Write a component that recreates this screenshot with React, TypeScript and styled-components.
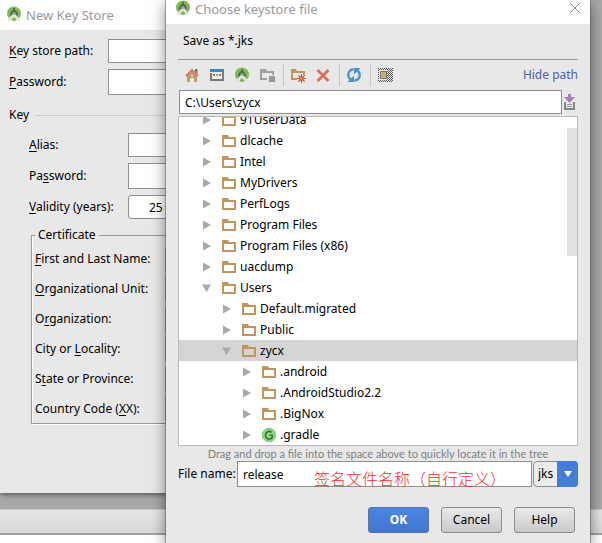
import React, { Fragment, ReactNode } from "react";
import styled, { createGlobalStyle, css } from "styled-components";

const GlobalStyle = createGlobalStyle`
  *, *::before, *::after { box-sizing: border-box; }
  html, body, #root { height: 100%; margin: 0; }
  body { overflow: hidden; }
  body, button, input, select {
    font-family: "Noto Sans", "Noto Sans CJK SC", sans-serif;
    font-size: 12px;
    line-height: 16px;
    color: #000;
  }
`;

const Desktop = styled.div`
  position: relative;
  display: flex;
  flex-direction: column;
  height: 100vh;
  overflow: hidden;
  background: #a9a9a9;
`;

const StatusBar = styled.div`
  margin-top: auto;
  height: 26px;
  border-top: 1px solid #c8c8c8;
  border-bottom: 2px solid #a2a2a2;
  background: linear-gradient(#e6e6e6, #d9d9d9);
`;

const Below = styled.div`
  height: 8px;
  background: #fff;
`;

const windowFrame = css`
  position: absolute;
  display: flex;
  flex-direction: column;
  background: #e8e8e8;
`;

const StoreWindow = styled.section`
  ${windowFrame}
  top: 0;
  left: 0;
  right: 60px;
  bottom: 50px;
  box-shadow: 0 1px 6px rgba(0, 0, 0, 0.6);
`;

const Dialog = styled.section`
  ${windowFrame}
  top: 0;
  left: 166px;
  right: 12px;
  bottom: 0;
  box-shadow: 0 0 0 1px rgba(90, 90, 90, 0.5), 0 4px 14px rgba(0, 0, 0, 0.5);
`;

const TitleBar = styled.header<{ $compact?: boolean }>`
  display: flex;
  flex: none;
  align-items: center;
  gap: 4px;
  height: ${(p) => (p.$compact ? 24 : 30)}px;
  padding: ${(p) => (p.$compact ? "0 9px 8px" : "0 6px 2px")};
  background: #fff;
`;

const Title = styled.h1`
  flex: 1;
  margin: 0;
  padding-top: 2px;
  font-size: 13px;
  font-weight: 400;
  color: #999;
`;

const CloseButton = styled.button`
  display: flex;
  padding: 0;
  border: 0;
  background: none;
`;

const StoreForm = styled.form`
  display: flex;
  flex-direction: column;
  padding: 9px 9px 0;
`;

const FieldRow = styled.div<{ $label: number; $height?: number }>`
  display: grid;
  grid-template-columns: ${(p) => p.$label}px 1fr;
  align-items: center;
  height: ${(p) => p.$height ?? 24}px;
`;

const KeyGroup = styled.div`
  display: flex;
  flex-direction: column;
  padding-left: 20px;
`;

const Stack = styled.div`
  display: flex;
  flex-direction: column;
  gap: 6px;
`;

const TextField = styled.input`
  width: 100%;
  min-width: 0;
  height: 100%;
  padding: 0 5px;
  border: 1px solid #8f8f8f;
  background: #fff;
`;

const YearsField = styled(TextField)`
  padding-left: 20px;
  border-radius: 3px;
`;

const SectionTitle = styled.h2`
  display: flex;
  align-items: center;
  gap: 6px;
  margin: 12px 0 10px;
  font-size: 12px;
  font-weight: 400;

  &::after {
    content: "";
    flex: 1;
    height: 1px;
    background: #ccc;
  }
`;

const Certificate = styled.fieldset`
  display: flex;
  flex-direction: column;
  gap: 6px;
  margin: 8px 0 0 2px;
  padding: 4px 9px 2px 3px;
  border: 1px solid #999;
  box-shadow: inset 1px 0 #fff, 0 1px #fff;

  legend {
    padding: 0 3px;
  }
`;

const Mnemonic = styled.span`
  text-decoration: underline;
  text-underline-offset: 2px;
  text-decoration-thickness: 1px;
  text-decoration-skip-ink: none;
`;

const DialogBody = styled.form`
  display: flex;
  flex: 1;
  flex-direction: column;
  min-height: 0;
  padding: 9px 12px 10px;
`;

const Description = styled.p`
  margin: 0 5px;
`;

const Toolbar = styled.div`
  display: flex;
  flex: none;
  align-items: center;
  height: 31px;
  margin-top: 10px;
  padding-left: 6px;
  border-top: 1px solid #999;
`;

const ToolGroup = styled.div`
  display: flex;
  gap: 9px;
`;

const ToolButton = styled.button`
  display: flex;
  flex: none;
  width: 16px;
  height: 16px;
  padding: 0;
  border: 0;
  background: none;
`;

const Divider = styled.span`
  width: 1px;
  height: 22px;
  margin: 0 6px 0 8px;
  background: #c4c4c4;
`;

const HidePath = styled.a`
  margin-left: auto;
  color: #4a63a8;
  text-decoration: none;
`;

const PathRow = styled.div`
  display: flex;
  flex: none;
  align-items: center;
  height: 24px;
  padding-left: 1px;
`;

const Tree = styled.ul`
  position: relative;
  display: flex;
  flex: 1;
  flex-direction: column;
  justify-content: flex-end;
  min-height: 0;
  margin: 2px 0 0;
  padding: 0;
  border: 1px solid #b8bcb8;
  background: #fff;
  list-style: none;
  overflow: hidden;
`;

const TreeRow = styled.li<{ $depth: number; $selected?: boolean }>`
  display: flex;
  flex: none;
  align-items: center;
  gap: 3px;
  height: 21px;
  padding-left: ${(p) => 23 + p.$depth * 20}px;
  background: ${(p) => (p.$selected ? "#d4d4d4" : "transparent")};

  svg {
    flex: none;
  }
`;

const ScrollThumb = styled.div`
  position: absolute;
  top: 11px;
  right: 0;
  width: 10px;
  height: 128px;
  background: #e2e2e2;
`;

const Hint = styled.p`
  flex: none;
  margin: 0;
  font-family: Lato, sans-serif;
  font-size: 11px;
  line-height: 15px;
  text-align: center;
  color: #808080;
`;

const FileRow = styled.div`
  position: relative;
  display: flex;
  flex: none;
  align-items: center;
  gap: 1px;
  height: 26px;

  label {
    flex: none;
    width: 58px;
    white-space: nowrap;
  }
`;

const Annotation = styled.span`
  position: absolute;
  top: 6px;
  left: 136px;
  font-family: "Noto Sans CJK SC", sans-serif;
  font-size: 16px;
  font-weight: 300;
  line-height: 22px;
  color: #f03030;
  white-space: nowrap;
  pointer-events: none;
`;

const Combo = styled.div`
  position: relative;
  display: flex;
  flex: none;
  width: 45px;
  height: 26px;
`;

const ComboSelect = styled.select`
  appearance: none;
  width: 100%;
  padding: 0 0 0 4px;
  border: 1px solid #8f8f8f;
  border-radius: 4px;
  background: #ececec;
`;

const ComboArrow = styled.span`
  position: absolute;
  inset: 0 0 0 auto;
  display: flex;
  align-items: center;
  justify-content: center;
  width: 21px;
  border-radius: 0 4px 4px 0;
  background: #447cd6;
  pointer-events: none;
`;

const Actions = styled.div`
  display: flex;
  flex: none;
  justify-content: flex-end;
  gap: 12px;
  margin-top: 20px;
  padding-right: 3px;
`;

const ActionButton = styled.button<{ $primary?: boolean }>`
  width: 61px;
  height: 26px;
  padding: 0;
  border: 1px solid ${(p) => (p.$primary ? "#5674a8" : "#8c8c8c")};
  border-radius: 3px;
  background: ${(p) =>
    p.$primary ? "linear-gradient(#4a86e0, #4076cf)" : "linear-gradient(#eaeaea, #c9c9c9)"};
  color: ${(p) => (p.$primary ? "#fff" : "#000")};
  font-weight: ${(p) => (p.$primary ? 700 : 400)};
`;

const Icon = ({ children, width = 16, height = 16 }: { children: ReactNode; width?: number; height?: number }) => (
  <svg width={width} height={height} viewBox={`0 0 ${width} ${height}`} fill="none" aria-hidden="true">
    {children}
  </svg>
);

const StudioIcon = () => (
  <Icon>
    <circle cx="8" cy="7.5" r="7" fill="#7ebb52" />
    <path d="M3.800 9.500C4 6 5.800 4 8 4s4 2 4.200 5.500z" fill="#55695a" />
    <path d="M7.300 2h1.400v3H7.300z" fill="#4a5a4c" />
    <path d="M7 8h2l5.500 6-1.500 1.500L8 11.500 3 15.500 1.500 14z" fill="#e3e6e0" />
    <path d="M6.500 12.500L8 11l1.500 1.500V15h-3z" fill="#7ebb52" />
    <path d="M6.500 6.500h3V9h-3z" fill="#a9b5a7" />
  </Icon>
);

const HomeIcon = () => (
  <Icon>
    <path d="M11 2h2.500v6H11z" fill="#777" />
    <path d="M3 8l5-5 5 5v7h-3v-4H6v4H3z" fill="#c09a64" />
    <path d="M2 9l6-6 6 6" stroke="#d47f76" strokeWidth="2" />
    <path d="M7 8h2v1.500H7z" fill="#f0e4d2" />
  </Icon>
);

const DesktopIcon = () => (
  <Icon>
    <path d="M2 6v7h12V5" stroke="#7a7a7a" strokeWidth="2" />
    <path d="M1 2h14v3H1z" fill="#3c87b8" />
    <path d="M3 6h10v6H3z" fill="#eee" />
    <path d="M4 7h2v2H4zM10 7h2v2h-2z" fill="#777" />
    <path d="M7 7h2v2H7z" fill="#cf9345" />
  </Icon>
);

const ModuleIcon = () => (
  <Icon>
    <path d="M1 13V2h6l1 2h7v4h-2V6H3v5h5v2z" fill="#a0a0a0" />
    <path d="M10 9h6v6h-6z" fill="#999" />
  </Icon>
);

const NewFolderIcon = () => (
  <Icon>
    <path d="M1 13V2h5l1 2h8v4h-2V6H3v5h4v2z" fill="#bf9558" />
    <path d="M11.500 7v9M7 11.500h9M8.300 8.300l6.400 6.400M14.700 8.300l-6.400 6.400" stroke="#c8503c" strokeWidth="1.200" />
    <circle cx="11.500" cy="11.500" r="2.200" fill="#d04a35" />
    <circle cx="11.500" cy="11.500" r="1.100" fill="#f2b44a" />
  </Icon>
);

const DeleteIcon = () => (
  <Icon>
    <path d="M2.500 3l11 11M13.500 3l-11 11" stroke="#df6a5c" strokeWidth="2.600" />
  </Icon>
);

const RefreshIcon = () => (
  <Icon>
    <path d="M7.500 2.300C3.800 2.800 2 5.500 2.300 8.500c.2 1.800 1 3 2.200 4M8.500 13.700c3.700-.5 5.500-3.200 5.200-6.200-.2-1.800-1-3-2.200-4" stroke="#4a93c2" strokeWidth="2.400" />
    <path d="M1.500 15H8V8.500zM14.500 1H8v6.500z" fill="#4a93c2" />
  </Icon>
);

const HiddenFilesIcon = () => (
  <Icon>
    <defs>
      <pattern id="dither" width="2" height="2" patternUnits="userSpaceOnUse">
        <path d="M0 0h1v1H0zM1 1h1v1H1z" fill="#555" />
      </pattern>
    </defs>
    <path d="M1 1h15v14H1z" fill="url(#dither)" />
    <path d="M2 3h8v10H2z" fill="#e8e8e8" />
    <path d="M3.500 4.500h6v7h-6z" fill="#d3ab74" stroke="#777" />
  </Icon>
);

const HistoryIcon = () => (
  <Icon>
    <path d="M3 8v7h9V8" stroke="#858585" strokeWidth="2" />
    <path d="M5 10.500h5M5 12.500h5" stroke="#999" />
    <path d="M6 0h3v3h4L7.500 9 2 3h4z" fill="#a87cbb" />
  </Icon>
);

const CloseIcon = () => (
  <Icon width={12} height={12}>
    <path d="M1 1l10 10M11 1L1 11" stroke="#888" />
  </Icon>
);

const FolderIcon = () => (
  <Icon>
    <path fillRule="evenodd" d="M1 14V2h6l1 2h7v10zM3 6v6h10V6z" fill="#bf9660" />
  </Icon>
);

const GradleIcon = () => (
  <Icon>
    <circle cx="8" cy="8" r="7" fill="#8edb83" />
    <circle cx="8" cy="8" r="6.500" stroke="#70c567" />
    <path d="M11 5.500A3.800 3.800 0 1 0 11.300 10.500V8.300H8.500" stroke="#3f6d43" strokeWidth="1.600" />
  </Icon>
);

const ExpandArrow = ({ open }: { open?: boolean }) => (
  <Icon>
    {open ? <path d="M0 4.500h9L4.500 12z" fill="#a9a9a9" /> : <path d="M1 3.500v9L9 8z" fill="#a9a9a9" />}
  </Icon>
);

type Node = { name: string; depth: number; open?: boolean; selected?: boolean; gradle?: boolean };

const nodes: Node[] = [
  { name: "91UserData", depth: 0 },
  { name: "dlcache", depth: 0 },
  { name: "Intel", depth: 0 },
  { name: "MyDrivers", depth: 0 },
  { name: "PerfLogs", depth: 0 },
  { name: "Program Files", depth: 0 },
  { name: "Program Files (x86)", depth: 0 },
  { name: "uacdump", depth: 0 },
  { name: "Users", depth: 0, open: true },
  { name: "Default.migrated", depth: 1 },
  { name: "Public", depth: 1 },
  { name: "zycx", depth: 1, open: true, selected: true },
  { name: ".android", depth: 2 },
  { name: ".AndroidStudio2.2", depth: 2 },
  { name: ".BigNox", depth: 2 },
  { name: ".gradle", depth: 2, gradle: true },
];

const certificateFields: [string, string, string, string][] = [
  ["first-last", "", "F", "irst and Last Name:"],
  ["unit", "", "O", "rganizational Unit:"],
  ["organization", "O", "r", "ganization:"],
  ["city", "City or ", "L", "ocality:"],
  ["state", "S", "t", "ate or Province:"],
  ["country", "Country Code (", "X", "X):"],
];

const tools = [
  [
    { label: "Home", icon: <HomeIcon /> },
    { label: "Desktop", icon: <DesktopIcon /> },
    { label: "Project", icon: <StudioIcon /> },
    { label: "Module", icon: <ModuleIcon /> },
  ],
  [
    { label: "New folder", icon: <NewFolderIcon /> },
    { label: "Delete", icon: <DeleteIcon /> },
  ],
  [{ label: "Refresh", icon: <RefreshIcon /> }],
  [{ label: "Show hidden files", icon: <HiddenFilesIcon /> }],
];

function NewKeyStore() {
  return (
    <StoreWindow>
      <TitleBar>
        <StudioIcon />
        <Title>New Key Store</Title>
      </TitleBar>
      <StoreForm>
        <Stack>
          <FieldRow $label={99}>
            <label htmlFor="store-path"><Mnemonic>K</Mnemonic>ey store path:</label>
            <TextField id="store-path" />
          </FieldRow>
          <FieldRow $label={99} $height={26}>
            <label htmlFor="store-password"><Mnemonic>P</Mnemonic>assword:</label>
            <TextField id="store-password" type="password" />
          </FieldRow>
        </Stack>
        <SectionTitle>Key</SectionTitle>
        <KeyGroup>
          <Stack>
            <FieldRow $label={99}>
              <label htmlFor="alias"><Mnemonic>A</Mnemonic>lias:</label>
              <TextField id="alias" />
            </FieldRow>
            <FieldRow $label={99} $height={26}>
              <label htmlFor="key-password">Pa<Mnemonic>s</Mnemonic>sword:</label>
              <TextField id="key-password" type="password" />
            </FieldRow>
            <FieldRow $label={99}>
              <label htmlFor="validity"><Mnemonic>V</Mnemonic>alidity (years):</label>
              <YearsField id="validity" defaultValue="25" />
            </FieldRow>
          </Stack>
          <Certificate>
            <legend>Certificate</legend>
            {certificateFields.map(([id, before, key, after]) => (
              <FieldRow key={id} $label={130}>
                <label htmlFor={id}>{before}<Mnemonic>{key}</Mnemonic>{after}</label>
                <TextField id={id} />
              </FieldRow>
            ))}
          </Certificate>
        </KeyGroup>
      </StoreForm>
    </StoreWindow>
  );
}

function ChooseKeystore() {
  return (
    <Dialog role="dialog" aria-label="Choose keystore file">
      <TitleBar $compact>
        <StudioIcon />
        <Title>Choose keystore file</Title>
        <CloseButton type="button" aria-label="Close"><CloseIcon /></CloseButton>
      </TitleBar>
      <DialogBody onSubmit={(e) => e.preventDefault()}>
        <Description>Save as *.jks</Description>
        <Toolbar>
          {tools.map((group, index) => (
            <Fragment key={index}>
              {index > 0 && <Divider />}
              <ToolGroup>
                {group.map((tool) => (
                  <ToolButton key={tool.label} type="button" aria-label={tool.label}>{tool.icon}</ToolButton>
                ))}
              </ToolGroup>
            </Fragment>
          ))}
          <HidePath href="#">Hide path</HidePath>
        </Toolbar>
        <PathRow>
          <TextField aria-label="Path" defaultValue="C:\Users\zycx" />
          <ToolButton type="button" aria-label="Recent paths"><HistoryIcon /></ToolButton>
        </PathRow>
        <Tree>
          {nodes.map((node) => (
            <TreeRow key={node.name} $depth={node.depth} $selected={node.selected}>
              <ExpandArrow open={node.open} />
              {node.gradle ? <GradleIcon /> : <FolderIcon />}
              <span>{node.name}</span>
            </TreeRow>
          ))}
          <ScrollThumb />
        </Tree>
        <Hint>Drag and drop a file into the space above to quickly locate it in the tree</Hint>
        <FileRow>
          <label htmlFor="file-name">File name:</label>
          <TextField id="file-name" defaultValue="release" />
          <Combo>
            <ComboSelect aria-label="Extension" defaultValue="jks"><option>jks</option></ComboSelect>
            <ComboArrow>
              <Icon width={8} height={6}><path d="M0 0h8L4 6z" fill="#fff" /></Icon>
            </ComboArrow>
          </Combo>
          <Annotation>签名文件名称（自行定义）</Annotation>
        </FileRow>
        <Actions>
          <ActionButton $primary>OK</ActionButton>
          <ActionButton type="button">Cancel</ActionButton>
          <ActionButton type="button">Help</ActionButton>
        </Actions>
      </DialogBody>
    </Dialog>
  );
}

export default function App() {
  return (
    <>
      <GlobalStyle />
      <Desktop>
        <StatusBar />
        <Below />
        <NewKeyStore />
        <ChooseKeystore />
      </Desktop>
    </>
  );
}
